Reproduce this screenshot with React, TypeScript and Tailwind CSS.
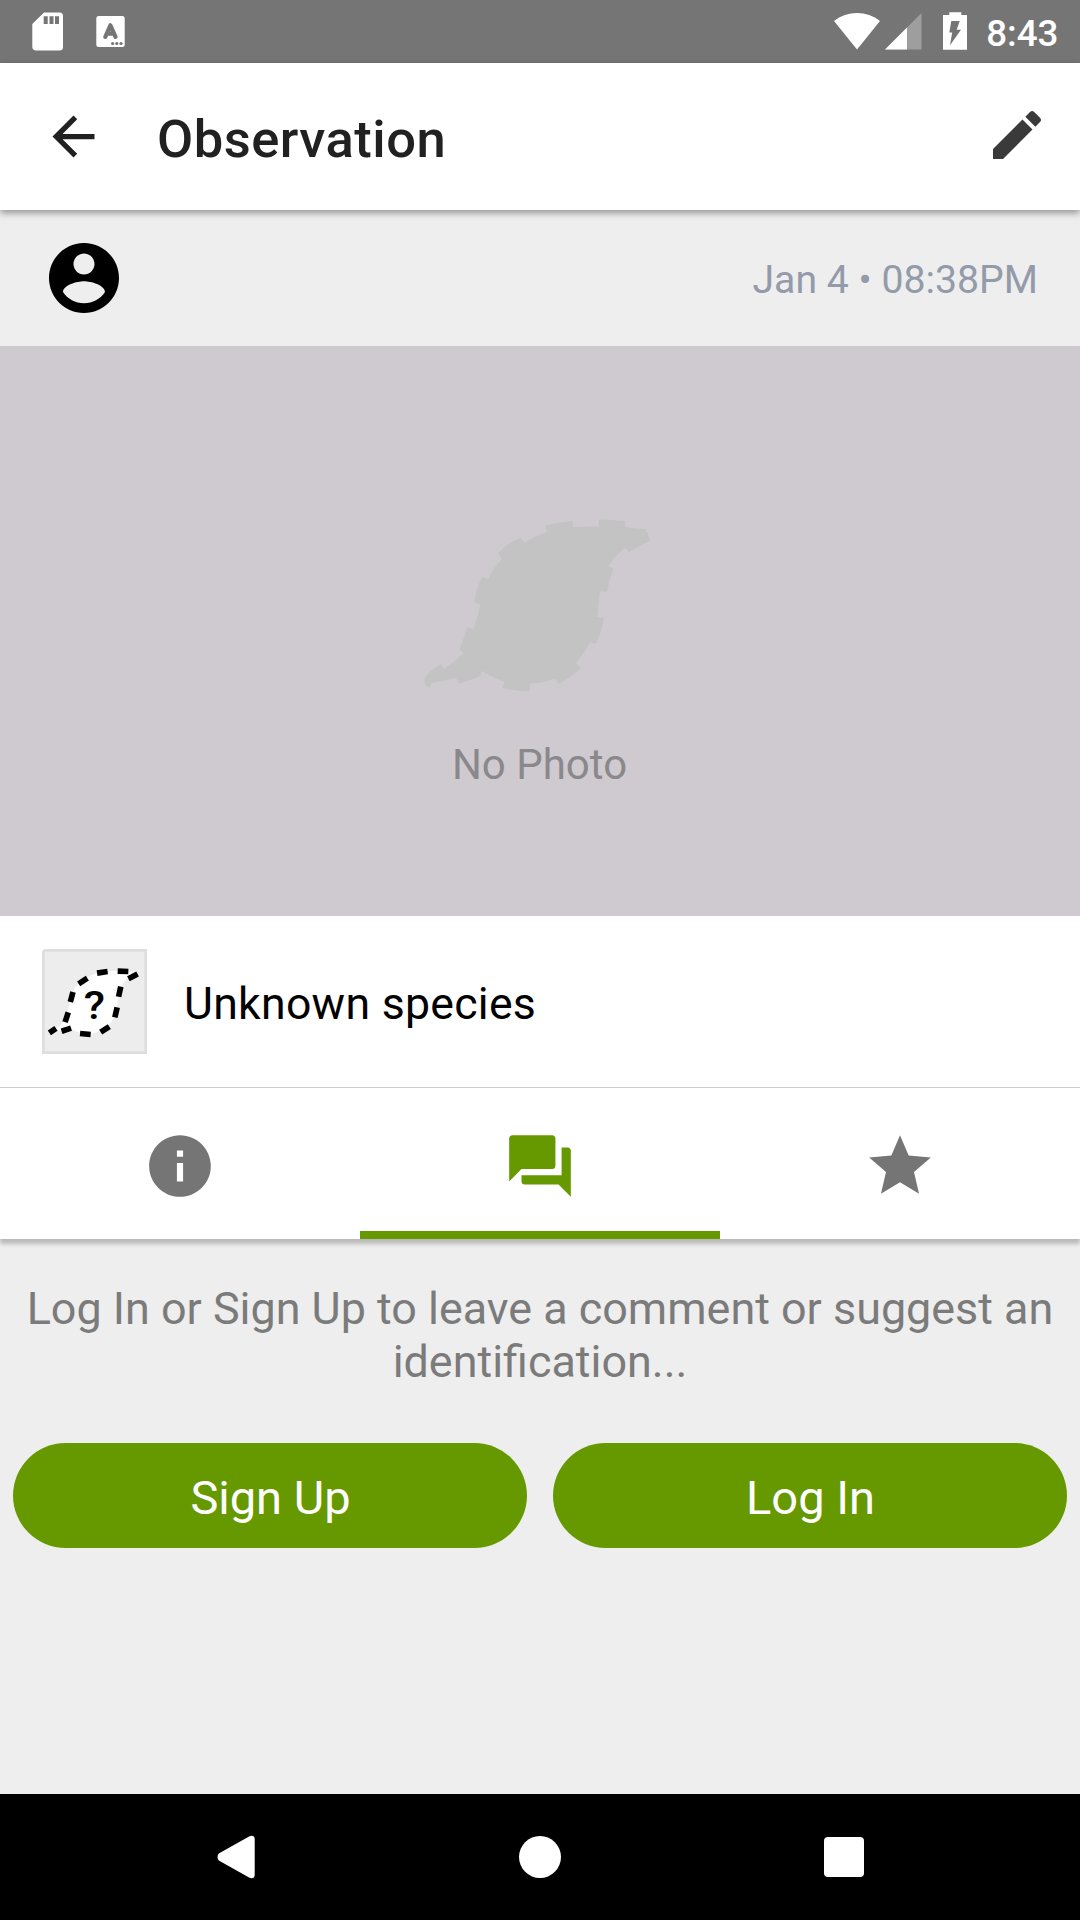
import React from 'react';

const LEAF_DASHES: [number, number, number, number][] = [
  [136, 117, -33, 31],
  [194, 91, -9, 32],
  [256, 88, 2, 32],
  [286, 103, -27, 31],
  [246, 149, -78, 31],
  [235, 211, -77, 31],
  [202, 262, -33, 31],
  [143, 276, 5, 32],
  [86, 263, -18, 30],
  [45, 266, -34, 24],
  [87, 226, -72, 31],
  [102, 165, -75, 31],
];

function StatusBar() {
  return (
    <div className="flex h-[63px] items-center bg-[#757575] text-white">
      <svg className="ml-8 h-[63px] w-[31px]" viewBox="0 0 31 63" fill="currentColor">
        <path
          fillRule="evenodd"
          d="M12 12.5h15.5a3.5 3.5 0 0 1 3.5 3.5v31a3.5 3.5 0 0 1-3.5 3.5H4A3.5 3.5 0 0 1 .3 47V24zM11.7 16.3v7.7h4v-7.7zM17.5 16.3v7.7h4v-7.7zM23 16.3v7.7h4v-7.7z"
        />
      </svg>
      <svg className="ml-[33px] h-[63px] w-[29px]" viewBox="0 0 29 63">
        <rect x=".3" y="16" width="28.4" height="31" rx="2.5" fill="#fff" />
        <path d="M9.3 36.8L14.4 25.3L19.5 36.8M11 33.6h7" fill="none" stroke="#757575" strokeWidth="4.2" strokeLinecap="round" strokeLinejoin="round" />
        <g fill="#757575">
          <circle cx="16.6" cy="43.5" r="1.6" />
          <circle cx="20.8" cy="43.5" r="1.6" />
          <circle cx="25" cy="43.5" r="1.6" />
        </g>
      </svg>
      <svg className="ml-auto h-[63px] w-[46px]" viewBox="0 0 46 63" fill="currentColor">
        <path d="M0 21C13 10.2 33 10.2 46 21L23 49.5z" />
      </svg>
      <svg className="ml-[5px] h-[63px] w-[37px]" viewBox="0 0 37 63" fill="currentColor">
        <path d="M36.5 13v36.5H0z" opacity=".3" />
        <path d="M22 27.5v22H0z" />
      </svg>
      <svg className="ml-[21px] h-[63px] w-[25px]" viewBox="0 0 25 63">
        <path d="M6.3 12.3h12V15h5.7v34.7H0V15h6.3z" fill="#fff" />
        <path d="M8.3 21h8.4l-3 8.7h4.3L7 45.3l2.2-12.8H6.3z" fill="#757575" />
      </svg>
      <span className="mt-[4px] mr-[21.5px] ml-[18.5px] text-[36.75px] leading-[44px] font-medium">8:43</span>
    </div>
  );
}

function Header() {
  return (
    <header className="relative z-10 flex h-[147px] items-center bg-white pr-[31px] pl-[42px] shadow-[0_3px_7px_rgba(0,0,0,0.38)]">
      <svg className="h-[63px] w-[63px]" viewBox="0 0 24 24" fill="#212121">
        <path d="M20 11H7.83l5.59-5.59L12 4l-8 8 8 8 1.41-1.41L7.83 13H20v-2z" />
      </svg>
      <h1 className="mt-[4px] ml-[52px] text-[52.5px] leading-[62px] font-medium tracking-[0.5px] text-[#212121]">Observation</h1>
      <svg className="mb-[4px] ml-auto h-[64px] w-[64px]" viewBox="0 0 24 24" fill="#3a3a3a">
        <path d="M3 17.25V21h3.75L17.81 9.94l-3.75-3.75L3 17.25zM20.71 7.04c.39-.39.39-1.02 0-1.41l-2.34-2.34c-.39-.39-1.02-.39-1.41 0l-1.83 1.83 3.75 3.75 1.83-1.83z" />
      </svg>
    </header>
  );
}

function UnknownThumb() {
  return (
    <svg className="ml-[42px] h-[105px] w-[105px]" viewBox="13 21 315 315">
      <path d="M25 21H328V336H13V33Q13 21 25 21z" fill="#dedede" />
      <path d="M27 29H320V328H21V35Q21 29 27 29z" fill="#ededed" />
      <path
        d="M42 268C60 258 74 246 83 232C92 208 96 184 101 160C112 124 152 96 200 90C235 85 262 85 292 94C265 106 250 130 245 152C239 180 240 200 232 220C220 250 190 276 145 276C125 274 110 266 97 258C80 262 62 266 42 268z"
        fill="#fff"
      />
      {LEAF_DASHES.map(([cx, cy, angle, len]) => (
        <rect
          key={`${cx}-${cy}`}
          x={cx - len / 2}
          y={cy - 8.5}
          width={len}
          height={17}
          transform={`rotate(${angle} ${cx} ${cy})`}
        />
      ))}
      <text
        transform="translate(170 231) scale(1.12 1)"
        textAnchor="middle"
        fontSize="117"
        fontWeight="500"
        fontFamily="Roboto, sans-serif"
      >
        ?
      </text>
    </svg>
  );
}

function Tabs() {
  return (
    <nav className="relative z-10 grid h-[151px] grid-cols-3 bg-white text-[#757575] shadow-[0_5px_4px_rgba(0,0,0,0.22)]">
      <div className="flex items-center justify-center">
        <svg className="mt-[4px] h-[74px] w-[74px]" viewBox="0 0 24 24" fill="currentColor">
          <path d="M12 2C6.48 2 2 6.48 2 12s4.48 10 10 10 10-4.48 10-10S17.52 2 12 2zm1 15h-2v-6h2v6zm0-8h-2V7h2v2z" />
        </svg>
      </div>
      <div className="flex items-center justify-center border-b-8 border-[#669900] pt-3 text-[#669900]">
        <svg className="h-[74px] w-[74px]" viewBox="0 0 24 24" fill="currentColor">
          <path d="M21 6h-2v9H6v2c0 .55.45 1 1 1h11l4 4V7c0-.55-.45-1-1-1zm-4 6V3c0-.55-.45-1-1-1H3c-.55 0-1 .45-1 1v14l4-4h10c.55 0 1-.45 1-1z" />
        </svg>
      </div>
      <div className="flex items-center justify-center">
        <svg className="mt-[4px] h-[74px] w-[74px]" viewBox="0 0 24 24" fill="currentColor">
          <path d="M12 17.27L18.18 21l-1.64-7.03L22 9.24l-7.19-.61L12 2 9.19 8.63 2 9.24l5.46 4.73L5.82 21z" />
        </svg>
      </div>
    </nav>
  );
}

function PillButton({ label }: { label: string }) {
  return (
    <button className="h-[105px] flex-1 rounded-full bg-[#669900] pt-[5px] pl-[1px] text-[47px] leading-[56px] text-white">
      {label}
    </button>
  );
}

export default function App() {
  return (
    <div className="flex h-[1920px] w-[1080px] flex-col overflow-hidden bg-[#eeeeee] font-[Roboto,sans-serif]">
      <StatusBar />
      <Header />

      <section className="flex h-[136px] items-center justify-between pr-[42px] pl-[42px]">
        <svg className="h-[84px] w-[84px]" viewBox="0 0 24 24">
          <path d="M12 2C6.48 2 2 6.48 2 12s4.48 10 10 10 10-4.48 10-10S17.52 2 12 2zm0 3c1.66 0 3 1.34 3 3s-1.34 3-3 3-3-1.34-3-3 1.34-3 3-3zm0 14.2c-2.5 0-4.71-1.28-6-3.22.03-1.99 4-3.08 6-3.08 1.99 0 5.97 1.09 6 3.08-1.29 1.94-3.5 3.22-6 3.22z" />
        </svg>
        <span className="mt-[4px] text-[39.2px] leading-[46px] text-[#939baa]">Jan 4 • 08:38PM</span>
      </section>

      <section className="flex h-[570px] flex-col items-center bg-[#cfcad0] pt-[171px]">
        <svg className="mr-[7px] h-[177px] w-[233px]" viewBox="60 51 699 531">
          <path
            d="M436 77Q475 66 518 63V81L596 79V58L676 63V82L736 88Q744 98 751 122Q715 138 687 156L676 143Q648 165 625 198L640 206Q626 240 621 276L600 274L592 350L612 354Q604 398 588 432L571 427Q552 460 528 490L542 504Q512 534 475 553L466 536Q430 548 391 552L389 574Q345 574 308 564L313 545Q275 532 246 512L241 528Q210 542 178 551L168 534L96 549L88 563Q72 558 73 538Q80 518 122 492L132 506Q165 486 190 460L179 449Q192 410 202 382L221 387Q233 350 241 314L223 308Q225 275 246 230L264 237Q280 204 306 176L294 159Q322 130 362 113L372 128Q405 108 440 97z"
            fill="#c3c3c3"
          />
        </svg>
        <span className="mt-[46px] mr-[1px] text-[42px] leading-[50px] text-[#8b888c]">No Photo</span>
      </section>

      <section className="flex h-[172px] items-center border-b border-[#cccccc] bg-white">
        <UnknownThumb />
        <span className="mt-[6px] ml-[37px] text-[44.6px] leading-[53px] tracking-[0.28px] text-black">Unknown species</span>
      </section>

      <Tabs />

      <section className="flex flex-1 flex-col">
        <p className="mt-[43px] px-[13px] text-center text-[44.9px] leading-[53px] text-[#7b7b7b]">
          Log In or Sign Up to leave a comment or suggest an identification...
        </p>
        <div className="mt-[55px] flex gap-[26px] px-[13px]">
          <PillButton label="Sign Up" />
          <PillButton label="Log In" />
        </div>
      </section>

      <footer className="flex h-[126px] items-center justify-between bg-black pr-[216px] pl-[217px]">
        <svg className="h-[44px] w-[38px]" viewBox="0 0 38 44" fill="#fff">
          <path d="M1.8 18.5L32.5 1.2Q37.7-.5 37.7 4.5V39.5Q37.7 44.5 32.5 42.8L1.8 25.5Q-.8 22 1.8 18.5z" />
        </svg>
        <div className="size-[42px] rounded-full bg-white" />
        <div className="size-[40px] rounded-[4px] bg-white" />
      </footer>
    </div>
  );
}
